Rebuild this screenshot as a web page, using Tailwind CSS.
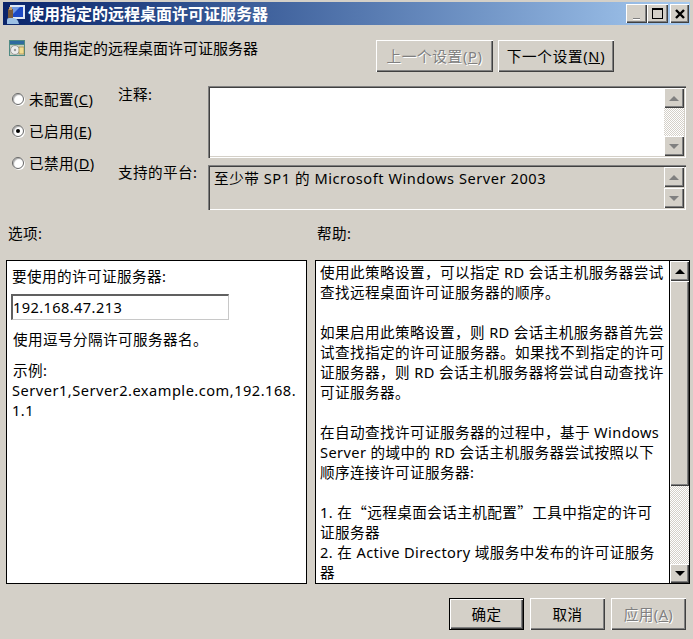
<!DOCTYPE html>
<html lang="zh-CN">
  <head>
    <meta charset="UTF-8" />
    <title>使用指定的远程桌面许可证服务器</title>
    <script src="https://cdn.jsdelivr.net/npm/@tailwindcss/browser@4"></script>
  </head>
  <body class="bg-[#d4d0c8]">
    <div class="w-[693px] h-[639px] overflow-hidden bg-[#d4d0c8] text-[14.6px] tracking-[0.4px] leading-[20px] text-black font-['Noto_Sans','Noto_Sans_CJK_SC',sans-serif]">
      <!-- title bar -->
      <div class="mx-[3px] mt-[2px] h-[23px] pl-[3px] pr-[1px] flex items-center bg-gradient-to-r from-[#0a246a] to-[#a6caf0]">
        <svg width="19" height="20" viewBox="0 0 19 20" class="shrink-0">
          <rect x="4" y="1" width="15" height="14" fill="#dfe8f4" />
          <rect x="6" y="3" width="11" height="10" fill="#1c49c4" />
          <path d="M6 3h8L6 11z" fill="#6f97e0" />
          <rect x="2" y="5" width="5" height="9" fill="#7a5a3a" />
          <rect x="3" y="3" width="3" height="3" fill="#c09a6a" />
          <path d="M1 20v-4q0-2 2-2h4q5 0 6 6z" fill="#9cc0e4" />
        </svg>
        <span class="ml-[3px] text-[16px] tracking-normal font-bold text-white whitespace-nowrap">使用指定的远程桌面许可证服务器</span>
        <div class="ml-auto flex">
          <div class="w-[21px] h-[19px] flex items-end justify-center pb-[3px] bg-[#d4d0c8] shadow-[inset_1px_1px_0_#fff,inset_-1px_-1px_0_#404040,inset_-2px_-2px_0_#808080]"><div class="w-[7px] h-[2px] bg-[#808080] border-b border-white"></div></div>
          <div class="w-[21px] h-[19px] flex items-center justify-center bg-[#d4d0c8] shadow-[inset_1px_1px_0_#fff,inset_-1px_-1px_0_#404040,inset_-2px_-2px_0_#808080]"><div class="w-[11px] h-[11px] border border-black border-t-2"></div></div>
          <div class="ml-[2px] w-[19px] h-[19px] flex items-center justify-center bg-[#d4d0c8] shadow-[inset_1px_1px_0_#fff,inset_-1px_-1px_0_#404040,inset_-2px_-2px_0_#808080]">
            <svg width="10" height="10" viewBox="0 0 10 10"><path d="M1 1 9 9M9 1 1 9" stroke="#000" stroke-width="2.4" /></svg>
          </div>
        </div>
      </div>

      <!-- heading row -->
      <div class="h-[50px] pl-[9px] pr-[79px] pt-[15px] flex items-start">
        <svg width="16" height="16" viewBox="0 0 16 16" class="shrink-0">
          <rect x="0" y="0" width="16" height="16" fill="#4f8a84" />
          <rect x="1" y="1" width="14" height="3" fill="#2f6aa0" />
          <rect x="1" y="5" width="14" height="10" fill="#c8d0c0" />
          <circle cx="6" cy="10" r="4.5" fill="#ececec" stroke="#9a9a9a" />
          <circle cx="6" cy="10" r="1.2" fill="#9a9a9a" />
          <rect x="10" y="7" width="5" height="7" fill="#f0dc90" stroke="#907a40" stroke-width=".6" />
        </svg>
        <span class="ml-[8px] mt-[-2px] tracking-normal text-[15px] whitespace-nowrap">使用指定的远程桌面许可证服务器</span>
        <div class="ml-auto flex gap-[5px]">
          <div class="w-[117px] h-[32px] flex items-center justify-center tracking-[0.7px] text-[#808080] [text-shadow:1px_1px_0_#fff] bg-[#d4d0c8] shadow-[inset_1px_1px_0_#fff,inset_-1px_-1px_0_#404040,inset_-2px_-2px_0_#808080]"><span>上一个设置(<u>P</u>)</span></div>
          <div class="w-[116px] h-[32px] flex items-center justify-center tracking-[0.7px] bg-[#d4d0c8] shadow-[inset_1px_1px_0_#fff,inset_-1px_-1px_0_#404040,inset_-2px_-2px_0_#808080]"><span>下一个设置(<u>N</u>)</span></div>
        </div>
      </div>

      <!-- state + comment / platform -->
      <div class="h-[135px] pt-[12px] flex">
        <div class="w-[118px] pl-[12px] pt-[2px] flex flex-col gap-[12px] shrink-0">
          <label class="h-[20px] flex items-center gap-[5px]"><span class="w-[12px] h-[12px] rounded-full bg-white border border-[#666] shadow-[1px_1px_0_#fff,inset_1px_1px_1px_#aaa]"></span><span>未配置(<u>C</u>)</span></label>
          <label class="h-[20px] flex items-center gap-[5px]"><span class="w-[12px] h-[12px] rounded-full bg-white border border-[#666] shadow-[1px_1px_0_#fff,inset_1px_1px_1px_#aaa] flex items-center justify-center"><span class="w-[4px] h-[4px] rounded-full bg-black"></span></span><span>已启用(<u>E</u>)</span></label>
          <label class="h-[20px] flex items-center gap-[5px]"><span class="w-[12px] h-[12px] rounded-full bg-white border border-[#666] shadow-[1px_1px_0_#fff,inset_1px_1px_1px_#aaa]"></span><span>已禁用(<u>D</u>)</span></label>
        </div>
        <div class="flex-1 pr-[7px]">
          <div class="h-[78px] flex">
            <div class="w-[90px] -mt-[3px]">注释:</div>
            <div class="mt-[-1px] w-[478px] h-[72px] p-[2px] flex justify-end bg-white shadow-[inset_1px_1px_0_#808080,inset_2px_2px_0_#404040,inset_-1px_-1px_0_#fff,inset_-2px_-2px_0_#d4d0c8]">
              <div class="w-[20px] flex flex-col bg-[repeating-conic-gradient(#fff_0_25%,#d4d0c8_0_50%)] bg-[length:2px_2px]">
                <div class="h-[20px] flex items-center justify-center bg-[#d4d0c8] shadow-[inset_1px_1px_0_#fff,inset_-1px_-1px_0_#404040,inset_-2px_-2px_0_#808080]"><div class="w-0 h-0 border-x-[5px] border-x-transparent border-b-[5px] border-b-[#808080]"></div></div>
                <div class="mt-auto h-[20px] flex items-center justify-center bg-[#d4d0c8] shadow-[inset_1px_1px_0_#fff,inset_-1px_-1px_0_#404040,inset_-2px_-2px_0_#808080]"><div class="w-0 h-0 border-x-[5px] border-x-transparent border-t-[5px] border-t-[#808080]"></div></div>
              </div>
            </div>
          </div>
          <div class="flex">
            <div class="w-[90px] -mt-[3px]">支持的平台:</div>
            <div class="w-[478px] h-[45px] pl-[6px] pt-[3px] pr-[2px] flex justify-between shadow-[inset_1px_1px_0_#808080,inset_2px_2px_0_#404040,inset_-1px_-1px_0_#fff,inset_-2px_-2px_0_#d4d0c8]">
              <span class="whitespace-nowrap tracking-[0.55px]">至少带 SP1 的 Microsoft Windows Server 2003</span>
              <div class="w-[20px] -mt-[1px] mb-[2px] flex flex-col justify-between">
                <div class="h-[20px] flex items-center justify-center bg-[#d4d0c8] shadow-[inset_1px_1px_0_#fff,inset_-1px_-1px_0_#404040,inset_-2px_-2px_0_#808080]"><div class="w-0 h-0 border-x-[5px] border-x-transparent border-b-[5px] border-b-[#808080]"></div></div>
                <div class="h-[20px] flex items-center justify-center bg-[#d4d0c8] shadow-[inset_1px_1px_0_#fff,inset_-1px_-1px_0_#404040,inset_-2px_-2px_0_#808080]"><div class="w-0 h-0 border-x-[5px] border-x-transparent border-t-[5px] border-t-[#808080]"></div></div>
              </div>
            </div>
          </div>
        </div>
      </div>

      <!-- section labels -->
      <div class="h-[50px] pt-[13px] pl-[8px] flex">
        <div class="w-[309px]">选项:</div>
        <div>帮助:</div>
      </div>

      <!-- panels -->
      <div class="h-[324px] pl-[6px] pr-[3px] flex gap-[8px]">
        <div class="w-[301px] bg-white border border-black pl-[4px] pt-[4px]">
          <div class="pl-[1px] mt-[1px]">要使用的许可证服务器:</div>
          <div class="mt-[8px] w-[218px] h-[26px] pb-[2px] flex items-center bg-white border-t-2 border-l-2 border-t-[#606060] border-l-[#606060] border-r border-b border-r-[#c8c8c8] border-b-[#c8c8c8]">192.168.47.213</div>
          <div class="pl-[2px] mt-[9px]">使用逗号分隔许可服务器名。</div>
          <div class="pl-[2px] mt-[11px]">示例:</div>
          <div class="pl-[1px] tracking-[0.5px]">Server1,Server2.example.com,192.168.<br />1.1</div>
        </div>
        <div class="flex-1 flex bg-white border border-black">
          <div class="flex-1 pl-[4px] pt-[1px] whitespace-nowrap overflow-hidden">
            使用此策略设置，可以指定 RD 会话主机服务器尝试<br />
            查找远程桌面许可证服务器的顺序。<br />
            <br />
            如果启用此策略设置，则 RD 会话主机服务器首先尝<br />
            试查找指定的许可证服务器。如果找不到指定的许可<br />
            证服务器，则 RD 会话主机服务器将尝试自动查找许<br />
            可证服务器。<br />
            <br />
            在自动查找许可证服务器的过程中，基于 Windows<br />
            Server 的域中的 RD 会话主机服务器尝试按照以下<br />
            顺序连接许可证服务器:<br />
            <br />
            1. 在<span class="font-['Noto_Sans_CJK_SC']">“</span>远程桌面会话主机配置<span class="font-['Noto_Sans_CJK_SC']">”</span>工具中指定的许可<br />
            证服务器<br />
            2. 在 Active Directory 域服务中发布的许可证服务<br />
            器
          </div>
          <div class="w-[20px] flex flex-col border-l border-black bg-[repeating-conic-gradient(#fff_0_25%,#d4d0c8_0_50%)] bg-[length:2px_2px]">
            <div class="h-[20px] flex items-center justify-center bg-[#d4d0c8] shadow-[inset_1px_1px_0_#fff,inset_-1px_-1px_0_#404040,inset_-2px_-2px_0_#808080]"><div class="w-0 h-0 border-x-[5px] border-x-transparent border-b-[5px] border-b-black"></div></div>
            <div class="h-[205px] bg-[#d4d0c8] shadow-[inset_1px_1px_0_#fff,inset_-1px_-1px_0_#404040,inset_-2px_-2px_0_#808080]"></div>
            <div class="mt-auto h-[19px] flex items-center justify-center bg-[#d4d0c8] shadow-[inset_1px_1px_0_#fff,inset_-1px_-1px_0_#404040,inset_-2px_-2px_0_#808080]"><div class="w-0 h-0 border-x-[5px] border-x-transparent border-t-[5px] border-t-black"></div></div>
          </div>
        </div>
      </div>

      <!-- footer buttons -->
      <div class="pt-[14px] pr-[7px] flex justify-end gap-[6px]">
        <div class="w-[75px] h-[32px] flex items-center justify-center bg-[#d4d0c8] border border-black shadow-[inset_1px_1px_0_#fff,inset_-1px_-1px_0_#404040,inset_-2px_-2px_0_#808080]">确定</div>
        <div class="w-[75px] h-[32px] flex items-center justify-center bg-[#d4d0c8] shadow-[inset_1px_1px_0_#fff,inset_-1px_-1px_0_#404040,inset_-2px_-2px_0_#808080]">取消</div>
        <div class="w-[75px] h-[32px] flex items-center justify-center text-[#808080] [text-shadow:1px_1px_0_#fff] bg-[#d4d0c8] shadow-[inset_1px_1px_0_#fff,inset_-1px_-1px_0_#404040,inset_-2px_-2px_0_#808080]"><span>应用(<u>A</u>)</span></div>
      </div>
    </div>
  </body>
</html>
